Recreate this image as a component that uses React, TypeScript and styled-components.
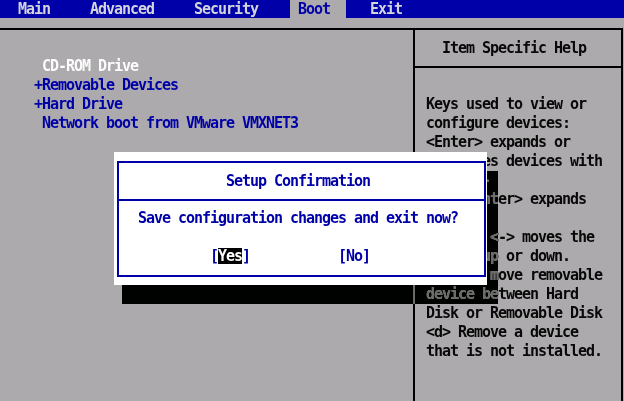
import styled, {createGlobalStyle} from 'styled-components';

const GlobalStyle = createGlobalStyle`
  html, body {
    margin: 0;
    padding: 0;
    background: #acaaac;
  }
`;

const BLUE = '#0000a8';

export default function App() {
  const menu = ['Main', 'Advanced', 'Security', 'Boot', 'Exit'];

  const bootItems = [
    {id: 1, marker: '', label: 'CD-ROM Drive', selected: true},
    {id: 2, marker: '+', label: 'Removable Devices', selected: false},
    {id: 3, marker: '+', label: 'Hard Drive', selected: false},
    {id: 4, marker: '', label: 'Network boot from VMware VMXNET3', selected: false},
  ];

  const helpLines = [
    'Keys used to view or',
    'configure devices:',
    '<Enter> expands or',
    'collapses devices with',
    'a + or -',
    '<Ctrl+Enter> expands',
    'all',
    '<+> and <-> moves the',
    'device up or down.',
    '<n> May move removable',
    'device between Hard',
    'Disk or Removable Disk',
    '<d> Remove a device',
    'that is not installed.',
  ];

  return (
    <>
      <GlobalStyle />
      <Screen>
        <MenuBar>
          {menu.map((name) => (
            <MenuItem key={name} $active={name === 'Boot'}>
              {name}
            </MenuItem>
          ))}
        </MenuBar>

        <Frame>
          <BootList>
            {bootItems.map(({id, marker, label, selected}) => (
              <BootItem key={id} $selected={selected}>
                <Marker>{marker}</Marker>
                <span>{label}</span>
              </BootItem>
            ))}
          </BootList>

          <HelpPanel>
            <HelpHeader>Item Specific Help</HelpHeader>
            <HelpBody>
              {helpLines.map((line, i) => (
                <HelpLine key={i}>{line}</HelpLine>
              ))}
            </HelpBody>
          </HelpPanel>
        </Frame>

        <Shadow />

        <Dialog>
          <DialogFrame>
            <DialogTitle>Setup Confirmation</DialogTitle>
            <DialogBody>
              <Message>Save configuration changes and exit now?</Message>
              <ButtonRow>
                <DialogButton>
                  [<ButtonLabel $focused>Yes</ButtonLabel>]
                </DialogButton>
                <DialogButton>
                  [<ButtonLabel>No</ButtonLabel>]
                </DialogButton>
              </ButtonRow>
            </DialogBody>
          </DialogFrame>
        </Dialog>
      </Screen>
    </>
  );
}

const Screen = styled.div`
  position: relative;
  display: flex;
  flex-direction: column;
  width: 624px;
  height: 401px;
  overflow: hidden;
  background: #acaaac;
  font-family: 'DejaVu Sans Mono', 'Liberation Mono', monospace;
  font-size: 15px;
  font-weight: bold;
  letter-spacing: -1.03px;
  line-height: 19px;
  white-space: pre;
`;

const MenuBar = styled.div`
  display: flex;
  gap: 16px;
  height: 18px;
  padding-left: 10px;
  background: ${BLUE};
  line-height: 18px;
`;

const MenuItem = styled.span<{$active?: boolean}>`
  padding: 0 16px 0 8px;
  color: ${({$active}) => ($active ? BLUE : '#d4d4dc')};
  background: ${({$active}) => ($active ? '#acaaac' : 'transparent')};
`;

const Frame = styled.div`
  flex: 1;
  display: grid;
  grid-template-columns: 413px 1fr;
  width: 623px;
  box-sizing: border-box;
  margin-top: 10px;
  border-top: 2px solid #000;
  border-right: 2px solid #000;
`;

const BootList = styled.div`
  display: flex;
  flex-direction: column;
  padding: 27px 0 0 34px;
`;

const BootItem = styled.div<{$selected?: boolean}>`
  display: flex;
  color: ${({$selected}) => ($selected ? '#fcfcfc' : BLUE)};
`;

const Marker = styled.span`
  display: inline-block;
  width: 8px;
`;

const HelpPanel = styled.div`
  display: flex;
  flex-direction: column;
  border-left: 2px solid #000;
  color: #080808;
`;

const HelpHeader = styled.div`
  display: flex;
  align-items: center;
  height: 36px;
  padding-left: 27px;
  border-bottom: 2px solid #000;
`;

const HelpBody = styled.div`
  display: flex;
  flex-direction: column;
  padding: 27px 0 0 11px;
`;

const HelpLine = styled.div`
  height: 19px;
`;

const Shadow = styled.div`
  position: absolute;
  left: 122px;
  top: 171px;
  width: 376px;
  height: 133px;
  z-index: 1;
  backdrop-filter: invert(1) contrast(2.9) brightness(0.42);
`;

const Dialog = styled.div`
  position: absolute;
  left: 114px;
  top: 152px;
  width: 373px;
  height: 133px;
  z-index: 2;
  box-sizing: border-box;
  display: flex;
  padding: 9px 1px 8px 3px;
  background: #fff;
  color: ${BLUE};
`;

const DialogFrame = styled.div`
  flex: 1;
  display: flex;
  flex-direction: column;
  border: 2px solid ${BLUE};
`;

const DialogTitle = styled.div`
  display: flex;
  align-items: center;
  height: 36px;
  padding-left: 107px;
  border-bottom: 2px solid ${BLUE};
`;

const DialogBody = styled.div`
  display: flex;
  flex-direction: column;
  padding: 8px 0 0 19px;
`;

const Message = styled.div`
  height: 19px;
`;

const ButtonRow = styled.div`
  display: flex;
  gap: 88px;
  margin-top: 19px;
  padding-left: 72px;
`;

const DialogButton = styled.span`
  color: ${BLUE};
`;

const ButtonLabel = styled.span<{$focused?: boolean}>`
  display: inline-block;
  line-height: 16px;
  color: ${({$focused}) => ($focused ? '#fff' : BLUE)};
  background: ${({$focused}) => ($focused ? '#000' : 'transparent')};
`;
